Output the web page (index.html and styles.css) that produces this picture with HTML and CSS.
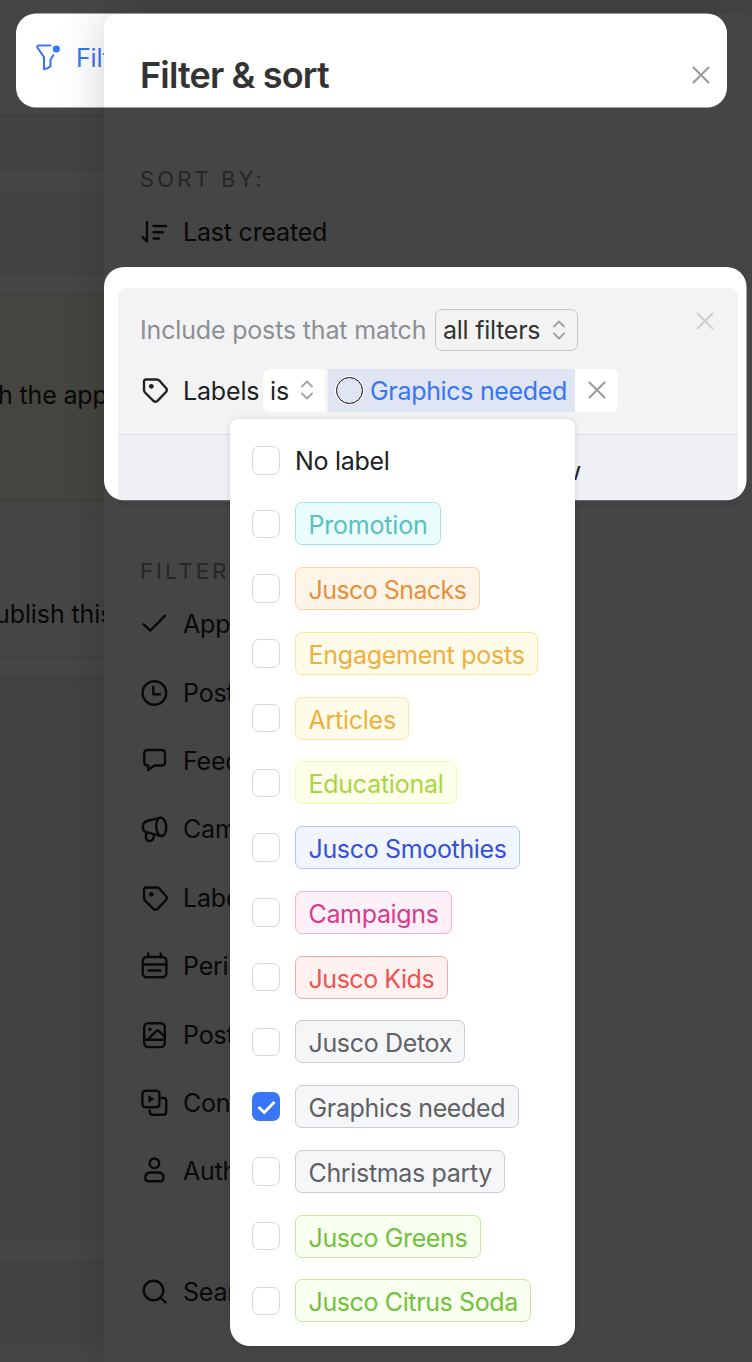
FILE: index.html
```html
<!DOCTYPE html>
<html lang="en">
<head>
<meta charset="utf-8">
<title>Filter &amp; sort</title>
<link rel="stylesheet" href="styles.css">
</head>
<body>
<svg class="defs" width="0" height="0">
  <symbol id="tag" viewBox="0 0 28 28"><path d="M6 3.5H16.5Q18.3 3.5 19.5 4.7L26 12Q27.6 14 26 16L17.5 24.8Q15.5 26.7 13.5 25L5 16.5Q4 15.2 4 14V5.5Q4 3.5 6 3.5Z"/><circle cx="11.3" cy="10.3" r="2.4" fill="currentColor" stroke="none"/></symbol>
  <symbol id="cross" viewBox="0 0 18 18"><path d="M1.5 1.5L16.5 16.5M16.5 1.5L1.5 16.5"/></symbol>
  <symbol id="updown" viewBox="0 0 12 20"><path d="M1 6.5L6 1.500L11 6.5M1 13.5L6 18.500L11 13.5"/></symbol>
</svg>
<div class="screen">
  <div class="board">
    <div class="toolbar">
      <svg class="funnel" viewBox="0 0 26 28"><path d="M15.5 2.500H4Q2 2.500 2.300 4.500L9 14V26.3Q13 25.6 15.5 23.3V16.8L18.3 12.3"/><circle cx="21.3" cy="6" r="3.6" fill="currentColor" stroke="none"/></svg>
      <span>Filters</span>
    </div>
    <div class="slot tint s1"></div>
    <div class="slot gap"></div>
    <div class="slot tint s2"></div>
    <div class="slot gap"></div>
    <div class="slot note"><span>h the app</span></div>
    <div class="slot s4"></div>
    <div class="slot publish"><span>ublish this</span></div>
    <div class="slot s6"></div>
    <div class="slot tint s7"></div>
    <div class="slot gap"></div>
    <div class="slot tint s2"></div>
  </div>

  <div class="panel">
    <div class="head">
      <h1>Filter &amp; sort</h1>
      <svg class="x" viewBox="0 0 18 18"><use href="#cross"/></svg>
    </div>
    <div class="section sort">
      <div class="caption">SORT BY:</div>
      <div class="item"><svg class="icon" viewBox="0 0 28 28"><path d="M7 4V23.5L2.5 19M13.5 8H26M13.5 14.2H23M13.5 20.5H19"/></svg><span>Last created</span></div>
      <div class="rules">
        <div class="match">
          <span class="lead">Include posts that match</span>
          <span class="select"><span class="all">all filters</span><svg class="ud" viewBox="0 0 12 20"><use href="#updown"/></svg></span>
          <svg class="x pale" viewBox="0 0 18 18"><use href="#cross"/></svg>
        </div>
        <div class="rule">
          <svg class="icon" viewBox="0 0 28 28"><use href="#tag"/></svg>
          <span class="field">Labels</span>
          <span class="op"><span>is</span><svg class="ud" viewBox="0 0 12 20"><use href="#updown"/></svg></span>
          <span class="value"><i class="ring"></i><span>Graphics needed</span></span>
          <span class="clear"><svg class="x" viewBox="0 0 18 18"><use href="#cross"/></svg></span>
        </div>
        <div class="save">view</div>
      </div>
    </div>
    <div class="section filters">
      <div class="caption">FILTER BY:</div>
      <div class="item"><svg class="icon" viewBox="0 0 28 28"><path d="M3.7 14.3L10.3 20.7L25 5.7"/></svg><span>Approval</span></div>
      <div class="item"><svg class="icon" viewBox="0 0 28 28"><circle cx="14.4" cy="14" r="11.800"/><path d="M13.3 7.7V15.3H20"/></svg><span>Post time</span></div>
      <div class="item"><svg class="icon" viewBox="0 0 28 28"><path d="M8.3 18.5H7.5Q4.3 18.5 4.3 15.3V6.5Q4.3 3 7.5 3H21.8Q25 3 25 6.5V15.3Q25 18.5 21.8 18.5H14.5L8.3 23Z"/></svg><span>Feedback</span></div>
      <div class="item"><svg class="icon" viewBox="0 0 28 28"><ellipse cx="21.2" cy="11.8" rx="5" ry="9.2" transform="rotate(-4 21.2 11.8)"/><path d="M20.5 2.7L7 6Q2.8 7.5 2.8 12Q2.8 15.8 6 17.2L21.5 21M6 17.5V22Q6 26 9.5 26Q13.5 26 13.7 21.5V19.3"/></svg><span>Campaign</span></div>
      <div class="item"><svg class="icon" viewBox="0 0 28 28"><use href="#tag"/></svg><span>Labels</span></div>
      <div class="item"><svg class="icon" viewBox="0 0 28 28"><rect x="2.8" y="5" width="23.6" height="20.2" rx="4"/><path d="M8.3 1.5V5M20.7 1.5V5M3 12.5H26M8.5 18.5H20.5"/></svg><span>Period</span></div>
      <div class="item"><svg class="icon" viewBox="0 0 28 28"><rect x="4.2" y="2.3" width="20.6" height="23.8" rx="4"/><path d="M4.2 18.7H24.8M7.8 18.3L16 10.3Q17.6 8.8 19.2 10.3L24.5 15.5"/><circle cx="9.9" cy="8.2" r="1.8" fill="currentColor" stroke="none"/></svg><span>Post type</span></div>
      <div class="item"><svg class="icon" viewBox="0 0 28 28"><rect x="2.4" y="1.7" width="17" height="16.6" rx="3.2"/><path d="M21.5 9H23.5Q26.2 9 26.2 11.7V22.7Q26.2 25.7 23.2 25.7H12.8Q9.8 25.7 9.8 22.7V21.5"/><path d="M8.3 6L14.3 9.9L8.3 13.7Z" fill="currentColor" stroke="none"/></svg><span>Content</span></div>
      <div class="item"><svg class="icon" viewBox="0 0 28 28"><circle cx="14.4" cy="6.3" r="4.8"/><path d="M5.300 21Q5.300 15.500 10.500 15.500H18.300Q23.500 15.500 23.500 21Q23.500 24.300 20.500 24.300H8.300Q5.300 24.300 5.300 21Z"/></svg><span>Author</span></div>
    </div>
    <div class="section search">
      <div class="item"><svg class="icon" viewBox="0 0 28 28"><circle cx="13.5" cy="12.5" r="9.8"/><path d="M20.5 19.5L25.5 24.3"/></svg><span>Search</span></div>
    </div>
  </div>

  <svg class="dim" viewBox="0 0 752 1362"><path fill-rule="evenodd" d="M0 0H752V1362H0ZM36 13.5A20 20 0 0 0 16 33.5V87.500A20 20 0 0 0 36 107.500H707A20 20 0 0 0 727 87.500V33.500A20 20 0 0 0 707 13.500ZM124 267A20 20 0 0 0 104 287V480.300A20 20 0 0 0 124 500.300H726.500A20 20 0 0 0 746.500 480.300V287A20 20 0 0 0 726.500 267Z"/></svg>

  <div class="menu">
    <div class="opt none"><i class="box"></i><span class="plain">No label</span></div>
    <div class="opt"><i class="box"></i><span class="chip teal">Promotion</span></div>
    <div class="opt"><i class="box"></i><span class="chip orange">Jusco Snacks</span></div>
    <div class="opt"><i class="box"></i><span class="chip yellow">Engagement posts</span></div>
    <div class="opt"><i class="box"></i><span class="chip yellow">Articles</span></div>
    <div class="opt"><i class="box"></i><span class="chip lime">Educational</span></div>
    <div class="opt"><i class="box"></i><span class="chip blue">Jusco Smoothies</span></div>
    <div class="opt"><i class="box"></i><span class="chip pink">Campaigns</span></div>
    <div class="opt"><i class="box"></i><span class="chip red">Jusco Kids</span></div>
    <div class="opt"><i class="box"></i><span class="chip gray">Jusco Detox</span></div>
    <div class="opt"><i class="box on"><svg viewBox="0 0 28 28"><path d="M6.500 15L12.200 20.500L22.500 10"/></svg></i><span class="chip gray">Graphics needed</span></div>
    <div class="opt"><i class="box"></i><span class="chip gray">Christmas party</span></div>
    <div class="opt"><i class="box"></i><span class="chip green">Jusco Greens</span></div>
    <div class="opt"><i class="box"></i><span class="chip green">Jusco Citrus Soda</span></div>
  </div>
</div>
</body>
</html>
```
FILE: styles.css
```css
* { box-sizing: border-box; }
body { margin: 0; font-family: Inter, "Liberation Sans", sans-serif; font-size: 25px; line-height: 30px; font-weight: 440; letter-spacing: -.15px; color: #202124; }
.defs { position: absolute; }
.screen { position: relative; display: grid; width: 752px; height: 1362px; overflow: hidden; background: #fdfdfd; }
.board, .panel { grid-area: 1 / 1; min-width: 0; }
svg { display: block; fill: none; stroke: currentColor; stroke-width: 2.4; stroke-linecap: round; stroke-linejoin: round; overflow: visible; flex: none; }
span { white-space: nowrap; }

/* board behind the panel */
.board { background: #fff; }
.toolbar { display: flex; align-items: flex-start; gap: 14px; height: 116px; padding: 43px 0 0 36px; border-bottom: 1px solid #e0e0e0; color: #3876f6; }
.funnel { width: 26px; height: 28px; margin-left: -1px; stroke-width: 2.1; }
.toolbar span { margin-left: 1px; }
.slot { border-bottom: 1px solid #e6e8e7; }
.tint { background: #f5fcf9; }
.s1 { height: 54px; }
.gap { height: 23px; }
.s2 { height: 80px; }
.note { height: 205px; padding-top: 84px; background: #fffce4; border-color: #e8d9a8; }
.s4 { height: 15px; }
.publish { height: 141px; padding-top: 83px; }
.note span { margin-left: -2px; }
.publish span { margin-left: -5px; letter-spacing: -.1px; }
.s6 { height: 21px; }
.s7 { height: 561px; box-shadow: inset 0 4px 6px rgba(0,0,0,.05); }

/* side panel */
.panel { position: relative; margin: 14px 0 0 104px; background: #fff; border-radius: 14px 0 0 0; box-shadow: 0 0 48px rgba(0,0,0,.18); }
.head { display: flex; justify-content: space-between; align-items: center; height: 123px; padding: 0 42px 0 36px; border-bottom: 1px solid #f0f0f0; color: #999; }
h1 { margin: 0; font-size: 36px; line-height: 44px; font-weight: 560; letter-spacing: -.85px; color: #333; }
.x { width: 18px; height: 18px; stroke-width: 2.1; }
.section { border-bottom: 1px solid #f0f0f0; }
.caption { padding-left: 36px; height: 30px; font-size: 22px; letter-spacing: 3.1px; color: #8c8c8c; }
.item { display: flex; align-items: center; height: 68.400px; gap: 15px; padding-left: 36px; letter-spacing: -.2px; }
.icon { width: 28px; height: 28px; }
.sort { padding: 27px 0 21px; }
.sort .item { margin-top: 4px; height: 68px; }
.rules { margin: 22px 14px 0; height: 219px; background: #f3f3f3; border-radius: 8px; overflow: hidden; }
.match { display: flex; align-items: center; height: 42px; margin: 21px 24px 0 22px; }
.lead { width: 295px; color: #8c8f94; letter-spacing: -.17px; }
.select { display: flex; align-items: center; justify-content: space-between; width: 143px; height: 42px; padding: 0 12px 0 7px; border: 1px solid #c8c8cc; border-radius: 7px; color: #333; letter-spacing: -.25px; }
.ud { width: 12px; height: 20px; color: #a0a0a6; stroke-width: 1.800; }
.pale { margin-left: auto; margin-top: -19px; color: #cfd0d4; }
.rule { display: flex; align-items: center; height: 42.600px; margin: 18px 0 22px 22px; }
.field { width: 80px; margin-left: 15px; padding-top: 1px; }
.op { display: flex; align-items: center; justify-content: space-between; width: 62px; height: 100%; padding: 0 12px 0 7px; background: #fff; border-radius: 7px 0 0 7px; }
.op span, .value span { padding-top: 1px; }
.value { display: flex; align-items: center; gap: 7px; width: 247px; height: 100%; margin-left: 3px; padding-left: 8px; background: #dfe5f3; color: #3876f6; letter-spacing: -.32px; }
.ring { width: 27px; height: 27px; border: 1.500px solid #111; border-radius: 50%; box-shadow: 0 0 0 1px #fff; flex: none; }
.clear { display: flex; align-items: center; justify-content: center; width: 43px; height: 100%; background: #fff; border-radius: 0 7px 7px 0; color: #999ca1; }
.save { height: 73px; border-top: 1px solid #dcdde2; background: #eff0f3; padding: 21px 157px 0 0; text-align: right; }
.filters { padding: 27px 0 21.800px; }
.filters .caption { margin-bottom: 4px; }
.search { padding: 29px 0; }

/* dimmed layer with highlighted areas */
.dim { position: absolute; inset: 0; width: 752px; height: 1362px; fill: #000; fill-opacity: .73; stroke: none; }

/* label menu */
.menu { position: absolute; left: 230px; top: 419px; width: 345px; height: 926.500px; padding-top: 10px; background: #fff; border-radius: 8px 8px 20px 20px; box-shadow: 0 0 6px rgba(0,0,0,.12); }
.opt { display: flex; align-items: center; gap: 15px; height: 64.750px; padding-left: 22px; }
.none { height: 62.500px; }
.box { display: block; width: 28px; height: 28.500px; border: 1px solid #d8d8d8; border-radius: 7px; flex: none; }
.on { border: 0; background: #3876f6; color: #fff; }
.on svg { width: 28px; height: 28px; stroke-width: 3; stroke-linecap: butt; stroke-linejoin: miter; }
.plain { padding-top: 1px; letter-spacing: -.3px; }
.chip { height: 43px; padding: 7px 12.500px 0; border: 1px solid; border-radius: 7px; letter-spacing: -.34px; }
.teal { color: #58bfc0; background: #eafdfc; border-color: #9fe6e0; letter-spacing: -.2px; }
.orange { color: #e98f3a; background: #fef5e8; border-color: #f7d797; letter-spacing: -.56px; }
.yellow { color: #efaf40; background: #fefbe8; border-color: #fae69c; letter-spacing: -.25px; }
.lime { color: #a8d642; background: #fdffe8; border-color: #eeffa8; letter-spacing: -.25px; }
.blue { color: #3650dc; background: #f0f5ff; border-color: #b0c6fa; }
.pink { color: #d83a8e; background: #fdf0f6; border-color: #f5b0d2; }
.red { color: #ee5350; background: #fef1f0; border-color: #f4aaa5; letter-spacing: -.46px; }
.gray { color: #5f6166; background: #f5f6f8; border-color: #c9ccd2; }
.green { color: #70c23c; background: #f8ffee; border-color: #c0ec98; letter-spacing: -.38px; }
```
